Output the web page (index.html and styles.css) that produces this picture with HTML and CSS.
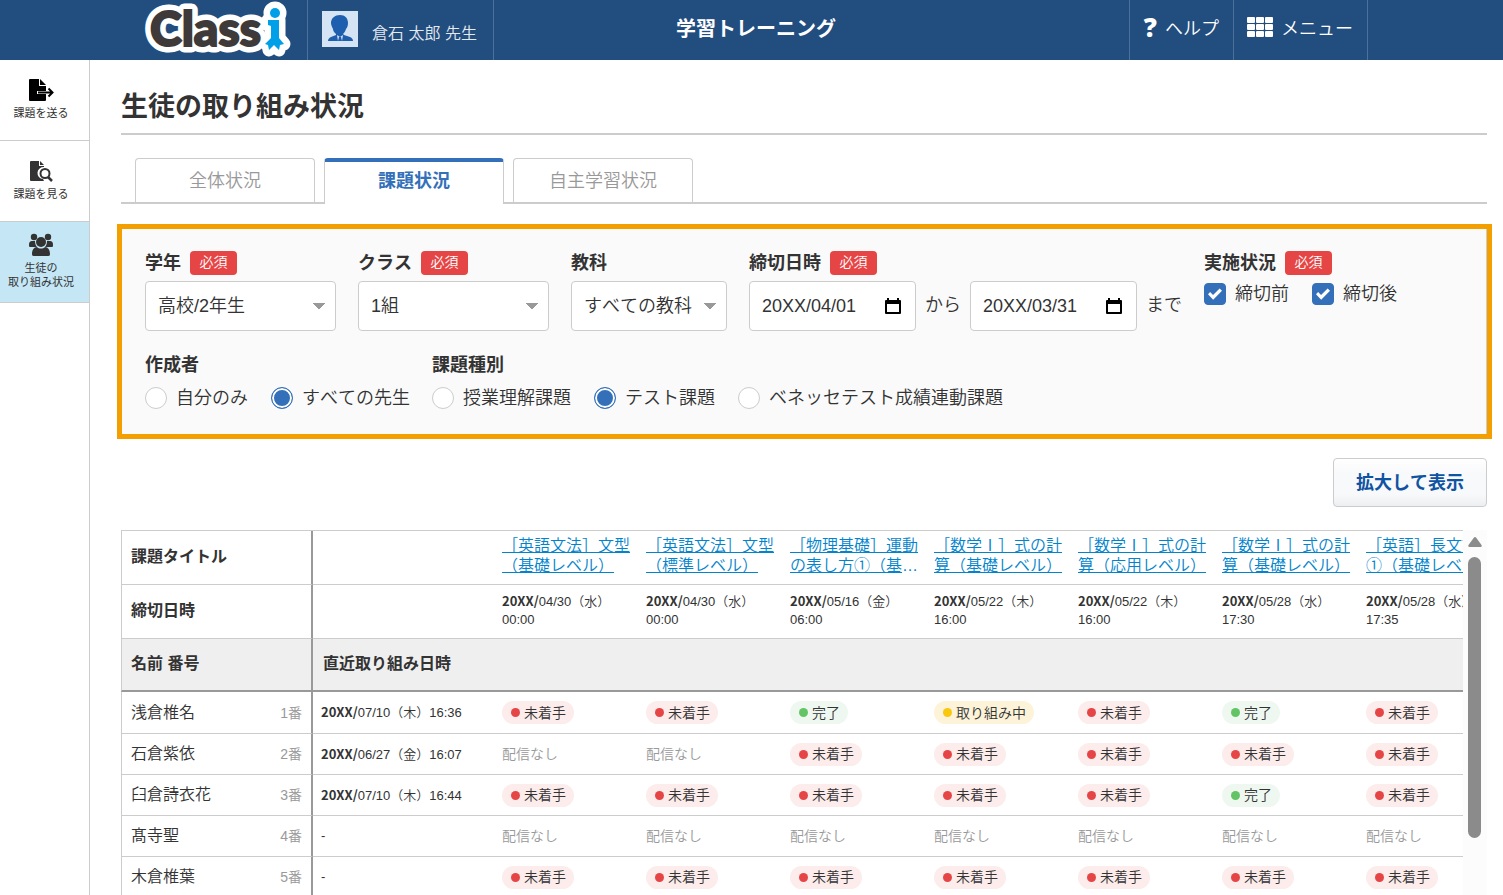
FILE: index.html
```html
<!DOCTYPE html>
<html lang="ja">
<head>
    <meta charset="UTF-8">
    <title>学習トレーニング</title>
    <link rel="stylesheet" href="styles.css">
</head>
<body>
    <header class="header">
        <div class="header-left">
            <a href="#" class="logo" aria-label="Classi">
                <svg width="148" height="60" viewBox="0 0 148 60">
                    <g class="logo-edge">
                        <text class="logo-text" x="6" y="46">Class</text>
                        <circle cx="131" cy="13" r="5"/>
                        <path d="M124 20h11v18l5 6-4 1-1 5-5-4-5 4-1-5-2-1 5-7V26l-3-1z"/>
                    </g>
                    <text class="logo-text" x="6" y="46">Class</text>
                    <g fill="#00a0e9">
                        <circle cx="131" cy="13" r="5"/>
                        <path d="M124 20h11v18l5 6-4 1-1 5-5-5-5 5-1-5-3-1 6-6V26l-3-1z"/>
                    </g>
                </svg>
            </a>
            <a href="#" class="user">
                <svg class="avatar" width="36" height="36" viewBox="0 0 36 36">
                    <path fill="#d5e4f5" d="M0 0h36v36H0z"/>
                    <path fill="#1d5fae" d="M18 4c5 0 8 3 8 8 0 3-1 5-2 6-1 3-2 4-3 5l1 1 6 2c2 1 3 2 3 4H6c0-2 1-3 3-4l5-2v-1c-2-2-3-3-3-5-1-2-2-4-2-6 0-5 4-8 9-8z"/>
                    <path fill="#d5e4f5" d="M15 24l3 2 3-2-1 6h-4z"/>
                    <path fill="#1d5fae" d="M17 26h2l1 4h-4z"/>
                </svg>
                倉石 太郎 先生
            </a>
        </div>
        <div class="header-title">学習トレーニング</div>
        <div class="header-right">
            <a href="#" class="header-link"><span class="question">?</span>ヘルプ</a>
            <a href="#" class="header-link">
                <svg width="26" height="20" viewBox="0 0 26 20" fill="#fff">
                    <rect x="0" y="0" width="8" height="6" rx="1"/><rect x="9" y="0" width="8" height="6" rx="1"/><rect x="18" y="0" width="8" height="6" rx="1"/>
                    <rect x="0" y="7" width="8" height="6" rx="1"/><rect x="9" y="7" width="8" height="6" rx="1"/><rect x="18" y="7" width="8" height="6" rx="1"/>
                    <rect x="0" y="14" width="8" height="6" rx="1"/><rect x="9" y="14" width="8" height="6" rx="1"/><rect x="18" y="14" width="8" height="6" rx="1"/>
                </svg>
                メニュー
            </a>
        </div>
    </header>

    <div class="layout">
        <nav class="sidebar">
            <a href="#" class="side-item">
                <svg width="26" height="24" viewBox="0 0 26 24">
                    <path d="M2 1h9v7h7v5H9v3h9v6a1 1 0 0 1-1 1H2a1 1 0 0 1-1-1V2a1 1 0 0 1 1-1z"/>
                    <path d="M12 1l6 6h-6z"/>
                    <path d="M10 14.500h14M20.500 10.500l4 4-4 4" fill="none" stroke="#000" stroke-width="2"/>
                </svg>
                課題を送る
            </a>
            <a href="#" class="side-item">
                <svg width="26" height="24" viewBox="0 0 26 24" fill="#333">
                    <path d="M3 2h8v5h5v1a6 6 0 0 0-1 12l1 2H3a1 1 0 0 1-1-1V3a1 1 0 0 1 1-1z"/>
                    <path d="M12 2l4 4h-4z"/>
                    <circle cx="17" cy="14.500" r="4.500" fill="#fff" stroke="#333" stroke-width="2"/>
                    <path d="M20 18l4 4" stroke="#333" stroke-width="2.500"/>
                </svg>
                課題を見る
            </a>
            <a href="#" class="side-item active">
                <svg width="26" height="24" viewBox="0 0 26 24" fill="#333">
                    <circle cx="6" cy="4" r="3.200"/>
                    <circle cx="20" cy="4" r="3.200"/>
                    <path d="M4 8h3c0 3 1 5 2 6H2c-1 0-1-1-1-2 0-3 1-4 3-4zM19 8h3c2 0 3 1 3 4 0 1 0 2-1 2h-7c1-1 2-3 2-6z"/>
                    <circle cx="13" cy="9" r="5"/>
                    <path d="M9 14c2 2 6 2 8 0 3 0 5 3 5 7 0 2-1 2-3 2H7c-2 0-3 0-3-2 0-4 2-7 5-7z"/>
                </svg>
                <span>生徒の<br>取り組み状況</span>
            </a>
        </nav>

        <main class="main">
            <h1>生徒の取り組み状況</h1>
            <div class="tabs">
                <a href="#" class="tab">全体状況</a>
                <a href="#" class="tab active">課題状況</a>
                <a href="#" class="tab">自主学習状況</a>
            </div>

            <form class="filters">
                <div class="filter-row">
                    <div class="field">
                        <div class="field-label"><label for="grade">学年</label><span class="required">必須</span></div>
                        <select id="grade" class="select"><option>高校/2年生</option></select>
                    </div>
                    <div class="field">
                        <div class="field-label"><label for="class">クラス</label><span class="required">必須</span></div>
                        <select id="class" class="select"><option>1組</option></select>
                    </div>
                    <div class="field">
                        <div class="field-label"><label for="subject">教科</label></div>
                        <select id="subject" class="select subject"><option>すべての教科</option></select>
                    </div>
                    <div class="field">
                        <div class="field-label"><label for="from">締切日時</label><span class="required">必須</span></div>
                        <div class="dates">
                            <div class="date-box">
                                <input type="text" id="from" value="20XX/04/01">
                                <svg width="16" height="18" viewBox="0 0 16 18"><path fill-rule="evenodd" d="M2 1h2v2h8V1h2v2h1a1 1 0 0 1 1 1v12a1 1 0 0 1-1 1H1a1 1 0 0 1-1-1V4a1 1 0 0 1 1-1h1zM2 7v8h12V7z"/></svg>
                            </div>
                            <span>から</span>
                            <div class="date-box">
                                <input type="text" id="to" value="20XX/03/31" aria-label="締切日時 まで">
                                <svg width="16" height="18" viewBox="0 0 16 18"><path fill-rule="evenodd" d="M2 1h2v2h8V1h2v2h1a1 1 0 0 1 1 1v12a1 1 0 0 1-1 1H1a1 1 0 0 1-1-1V4a1 1 0 0 1 1-1h1zM2 7v8h12V7z"/></svg>
                            </div>
                            <span>まで</span>
                        </div>
                    </div>
                    <div class="field">
                        <div class="field-label"><span>実施状況</span><span class="required">必須</span></div>
                        <div class="options">
                            <label><input type="checkbox" checked><span>締切前</span></label>
                            <label><input type="checkbox" checked><span>締切後</span></label>
                        </div>
                    </div>
                </div>
                <div class="filter-row">
                    <div class="field">
                        <div class="field-label"><span>作成者</span></div>
                        <div class="options radios">
                            <label><input type="radio" name="author"><span>自分のみ</span></label>
                            <label><input type="radio" name="author" checked><span>すべての先生</span></label>
                        </div>
                    </div>
                    <div class="field">
                        <div class="field-label"><span>課題種別</span></div>
                        <div class="options radios">
                            <label><input type="radio" name="kind"><span>授業理解課題</span></label>
                            <label><input type="radio" name="kind" checked><span>テスト課題</span></label>
                            <label><input type="radio" name="kind"><span>ベネッセテスト成績連動課題</span></label>
                        </div>
                    </div>
                </div>
            </form>

            <div class="actions">
                <button type="button" class="expand">拡大して表示</button>
            </div>

            <div class="table-area">
                <div class="table-wrap">
                    <table>
                        <colgroup>
                            <col class="col-name"><col class="col-last">
                            <col class="col-task"><col class="col-task"><col class="col-task"><col class="col-task"><col class="col-task"><col class="col-task"><col class="col-task">
                        </colgroup>
                        <thead>
                            <tr class="row-title">
                                <th>課題タイトル</th>
                                <td></td>
                                <td><a href="#">［英語文法］文型（基礎レベル）</a></td>
                                <td><a href="#">［英語文法］文型（標準レベル）</a></td>
                                <td><a href="#">［物理基礎］運動の表し方①（基礎レベル）</a></td>
                                <td><a href="#">［数学Ⅰ］式の計算（基礎レベル）</a></td>
                                <td><a href="#">［数学Ⅰ］式の計算（応用レベル）</a></td>
                                <td><a href="#">［数学Ⅰ］式の計算（基礎レベル）</a></td>
                                <td><a href="#">［英語］長文読解①（基礎レベル）</a></td>
                            </tr>
                            <tr class="row-date">
                                <th>締切日時</th>
                                <td></td>
                                <td><b>20XX/</b>04/30（水）<br>00:00</td>
                                <td><b>20XX/</b>04/30（水）<br>00:00</td>
                                <td><b>20XX/</b>05/16（金）<br>06:00</td>
                                <td><b>20XX/</b>05/22（木）<br>16:00</td>
                                <td><b>20XX/</b>05/22（木）<br>16:00</td>
                                <td><b>20XX/</b>05/28（水）<br>17:30</td>
                                <td><b>20XX/</b>05/28（水）<br>17:35</td>
                            </tr>
                            <tr class="row-head">
                                <th>名前 番号</th>
                                <th colspan="8">直近取り組み日時</th>
                            </tr>
                        </thead>
                        <tbody>
                            <tr>
                                <td><div class="student">浅倉椎名<span>1番</span></div></td>
                                <td class="last"><b>20XX/</b>07/10（木）16:36</td>
                                <td><span class="pill todo">未着手</span></td>
                                <td><span class="pill todo">未着手</span></td>
                                <td><span class="pill done">完了</span></td>
                                <td><span class="pill doing">取り組み中</span></td>
                                <td><span class="pill todo">未着手</span></td>
                                <td><span class="pill done">完了</span></td>
                                <td><span class="pill todo">未着手</span></td>
                            </tr>
                            <tr>
                                <td><div class="student">石倉紫依<span>2番</span></div></td>
                                <td class="last"><b>20XX/</b>06/27（金）16:07</td>
                                <td class="none">配信なし</td>
                                <td class="none">配信なし</td>
                                <td><span class="pill todo">未着手</span></td>
                                <td><span class="pill todo">未着手</span></td>
                                <td><span class="pill todo">未着手</span></td>
                                <td><span class="pill todo">未着手</span></td>
                                <td><span class="pill todo">未着手</span></td>
                            </tr>
                            <tr>
                                <td><div class="student">臼倉詩衣花<span>3番</span></div></td>
                                <td class="last"><b>20XX/</b>07/10（木）16:44</td>
                                <td><span class="pill todo">未着手</span></td>
                                <td><span class="pill todo">未着手</span></td>
                                <td><span class="pill todo">未着手</span></td>
                                <td><span class="pill todo">未着手</span></td>
                                <td><span class="pill todo">未着手</span></td>
                                <td><span class="pill done">完了</span></td>
                                <td><span class="pill todo">未着手</span></td>
                            </tr>
                            <tr>
                                <td><div class="student">髙寺聖<span>4番</span></div></td>
                                <td class="last">-</td>
                                <td class="none">配信なし</td>
                                <td class="none">配信なし</td>
                                <td class="none">配信なし</td>
                                <td class="none">配信なし</td>
                                <td class="none">配信なし</td>
                                <td class="none">配信なし</td>
                                <td class="none">配信なし</td>
                            </tr>
                            <tr>
                                <td><div class="student">木倉椎葉<span>5番</span></div></td>
                                <td class="last">-</td>
                                <td><span class="pill todo">未着手</span></td>
                                <td><span class="pill todo">未着手</span></td>
                                <td><span class="pill todo">未着手</span></td>
                                <td><span class="pill todo">未着手</span></td>
                                <td><span class="pill todo">未着手</span></td>
                                <td><span class="pill todo">未着手</span></td>
                                <td><span class="pill todo">未着手</span></td>
                            </tr>
                        </tbody>
                    </table>
                </div>
                <div class="scrollbar">
                    <svg width="16" height="12" viewBox="0 0 16 12"><path fill="#8b8b8b" d="M7 1.500a1.300 1.300 0 0 1 2 0l5.500 7.500c.6 1 0 2-1 2h-11c-1 0-1.600-1-1-2z"/></svg>
                    <div class="thumb"></div>
                </div>
            </div>
        </main>
    </div>
</body>
</html>
```
FILE: styles.css
```css
* {
    box-sizing: border-box;
}
body {
    margin: 0;
    height: 100vh;
    display: flex;
    flex-direction: column;
    overflow: hidden;
    font-family: "Liberation Sans", "Noto Sans CJK JP", sans-serif;
    font-size: 18px;
    font-weight: 350;
    font-kerning: none;
    color: #333;
    background: #fff;
    text-spacing-trim: space-all;
}
a {
    color: inherit;
    text-decoration: none;
}

/* Header */
.header {
    flex: none;
    display: grid;
    grid-template-columns: 1fr auto 1fr;
    grid-template-rows: 60px;
    padding: 0 135px 0 144px;
    background: #224d7f;
    color: #fff;
}
.header-left,
.header-right {
    display: flex;
}
.header-right {
    justify-content: flex-end;
}
.logo {
    width: 164px;
    border-right: 1px solid #4e7199;
}
.logo svg {
    display: block;
    overflow: visible;
}
.logo-text {
    font-family: Lato, sans-serif;
    font-size: 48px;
    font-weight: 900;
    fill: #3e3a39;
    stroke: #3e3a39;
    stroke-width: 2px;
}
.logo-edge,
.logo-edge .logo-text {
    fill: #fff;
    stroke: #fff;
    stroke-width: 13px;
    stroke-linejoin: round;
}
.user {
    display: flex;
    align-items: center;
    gap: 14px;
    padding: 4px 16px 0 14px;
    border-right: 1px solid #4e7199;
    font-size: 16px;
    color: #e4eaf1;
}
.avatar {
    margin-bottom: 6px;
}
.header-title {
    font-size: 20px;
    font-weight: bold;
    line-height: 58px;
}
.header-link {
    display: flex;
    align-items: center;
    gap: 8px;
    padding: 0 14px 6px;
    border-left: 1px solid #4e7199;
}
.header-link:last-child {
    padding-left: 13px;
    border-right: 1px solid #4e7199;
}
.question {
    font-family: "Open Sans", sans-serif;
    font-size: 26px;
    font-weight: 800;
}

/* Sidebar */
.layout {
    flex: 1;
    display: flex;
    min-height: 0;
}
.sidebar {
    flex: none;
    width: 90px;
    border-right: 1px solid #ccc;
}
.side-item {
    display: flex;
    flex-direction: column;
    align-items: center;
    justify-content: center;
    gap: 4px;
    height: 81px;
    padding: 0 7px 2px 0;
    border-bottom: 1px solid #ccc;
    font-size: 11px;
    font-weight: 400;
    line-height: 14px;
    text-align: center;
}
.side-item.active {
    background: #c5e6f5;
}

/* Main */
.main {
    flex: 1;
    display: flex;
    flex-direction: column;
    min-width: 0;
    padding: 27px 16px 0 31px;
}
h1 {
    margin: 0 0 23px;
    padding-bottom: 6px;
    border-bottom: 2px solid #ccc;
    font-size: 27px;
    line-height: 40px;
}
.tabs {
    display: flex;
    gap: 9px;
    padding-left: 14px;
    border-bottom: 2px solid #ccc;
}
.tab {
    width: 180px;
    height: 44px;
    border: 1px solid #ccc;
    border-bottom: 0;
    border-radius: 4px 4px 0 0;
    line-height: 44px;
    text-align: center;
    color: #999;
}
.tab.active {
    height: 46px;
    margin-bottom: -2px;
    border-top: 4px solid #3470b9;
    background: #fff;
    line-height: 38px;
    font-weight: bold;
    color: #3470b9;
}

/* Filters */
.filters {
    margin: 20px -5px 0 -4px;
    padding: 22px 23px 25px;
    border: 5px solid #f39f00;
    background: #fafafa;
    box-shadow: inset -1px 0 #ccc;
}
.filter-row {
    display: flex;
    gap: 22px;
}
.filter-row + .filter-row {
    margin-top: 22px;
}
.field-label {
    display: flex;
    gap: 9px;
    height: 24px;
    font-weight: bold;
    line-height: 24px;
}
.required {
    width: 47px;
    border-radius: 4px;
    background: #e64545;
    color: #fff;
    font-size: 14px;
    font-weight: 350;
    line-height: 22px;
    text-align: center;
}
.select,
.date-box {
    height: 50px;
    border: 1px solid #ccc;
    border-radius: 4px;
    background: #fff;
}
.select {
    appearance: none;
    width: 191px;
    margin-top: 6px;
    padding: 0 12px;
    background-image: linear-gradient(to bottom right, #999 50%, transparent 51%), linear-gradient(to bottom left, #999 50%, transparent 51%);
    background-position: right 10px center, right 16px center;
    background-size: 6px 6px;
    background-repeat: no-repeat;
    color: #333;
    font: inherit;
}
.select.subject {
    width: 156px;
}
.dates {
    display: flex;
    align-items: center;
    gap: 9px;
    margin-top: 6px;
}
.dates > span {
    padding-bottom: 6px;
}
.date-box {
    display: flex;
    align-items: center;
    width: 167px;
    padding: 0 14px 0 12px;
}
.date-box input {
    flex: 1;
    min-width: 0;
    padding: 0;
    border: 0;
    background: none;
    color: #333;
    font: inherit;
}
.options {
    display: flex;
    gap: 23px;
    margin-top: 8px;
}
.radios {
    margin-top: 10px;
}
.options label {
    display: flex;
    gap: 9px;
    height: 22px;
    line-height: 22px;
}
.options input {
    appearance: none;
    width: 22px;
    height: 22px;
    margin: 0;
    border: 1px solid #ccc;
    border-radius: 50%;
    background: #fff;
}
.options input[type="radio"]:checked {
    border-color: #3470b9;
    background: #3470b9;
    box-shadow: inset 0 0 0 2px #fff;
}
.options input[type="checkbox"] {
    border-radius: 4px;
}
.options input[type="checkbox"]:checked {
    display: grid;
    place-items: center;
    border-color: #3470b9;
    background: #3470b9;
}
.options input[type="checkbox"]:checked::before {
    content: "";
    width: 14px;
    height: 12px;
    background: #fff;
    clip-path: polygon(0 52%, 15% 34%, 36% 58%, 83% 4%, 100% 23%, 37% 97%);
}

.actions {
    display: flex;
    justify-content: flex-end;
    margin: 19px 0 23px;
}
.expand {
    height: 49px;
    padding: 0 22px 4px;
    border: 1px solid #ccc;
    border-radius: 4px;
    background: linear-gradient(#fff, #f8f9fb 30%, #f8f9fb 75%, #eceff1);
    color: #0f53a2;
    font: inherit;
    font-weight: bold;
}

/* Table */
.table-area {
    flex: 1;
    display: flex;
    min-height: 0;
}
.table-wrap {
    flex: 1;
    min-width: 0;
    overflow: hidden;
}
table {
    width: 1379px;
    table-layout: fixed;
    border-collapse: separate;
    border-spacing: 0;
    border-top: 1px solid #ccc;
}
.col-name {
    width: 192px;
}
.col-last {
    width: 179px;
}
.col-task {
    width: 144px;
}
th,
td {
    height: 41px;
    padding: 0 2px 0 10px;
    border-bottom: 1px solid #ccc;
    font-size: 14px;
    line-height: 18px;
    text-align: left;
    vertical-align: middle;
}
th {
    padding-bottom: 2px;
    font-size: 16px;
}
tbody tr:first-child td {
    height: 42px;
}
tr > :first-child {
    border-left: 1px solid #ccc;
    border-right: 2px solid #999;
    padding-left: 9px;
    padding-right: 9px;
}
.row-date td,
.last {
    font-size: 13px;
}
.last {
    padding-left: 8px;
}
.row-title > *,
.row-date > * {
    height: 54px;
    padding-bottom: 2px;
}
.row-title a {
    display: -webkit-box;
    -webkit-box-orient: vertical;
    -webkit-line-clamp: 2;
    overflow: hidden;
    font-size: 16px;
    line-height: 20px;
    color: #0284cc;
    text-decoration: underline;
}
.row-title td {
    padding-bottom: 4px;
}
.row-head > * {
    height: 53px;
    border-bottom: 2px solid #999;
    background: #efefef;
}
td b {
    font-family: "Noto Sans CJK JP", sans-serif;
    font-weight: 700;
    line-height: 18px;
}
.student {
    display: flex;
    justify-content: space-between;
    align-items: center;
    font-size: 16px;
}
.student span {
    font-size: 14px;
    color: #999;
}
.none {
    color: #999;
}
.pill {
    display: inline-flex;
    align-items: center;
    gap: 4px;
    height: 23px;
    padding: 0 8px 0 9px;
    border-radius: 12px;
}
.pill::before {
    content: "";
    width: 9px;
    height: 9px;
    border-radius: 50%;
}
.todo {
    background: #fcecec;
}
.todo::before {
    background: #e64545;
}
.done {
    background: #eff8f0;
}
.done::before {
    background: #63c466;
}
.doing {
    background: #fcf3d9;
}
.doing::before {
    background: #f9c80e;
}
.scrollbar {
    flex: none;
    display: flex;
    flex-direction: column;
    align-items: center;
    gap: 9px;
    width: 24px;
    padding: 6px 1px 0 0;
    background: #fcfcfc;
}
.thumb {
    width: 13px;
    height: 281px;
    border-radius: 7px;
    background: #8b8b8b;
}
```
